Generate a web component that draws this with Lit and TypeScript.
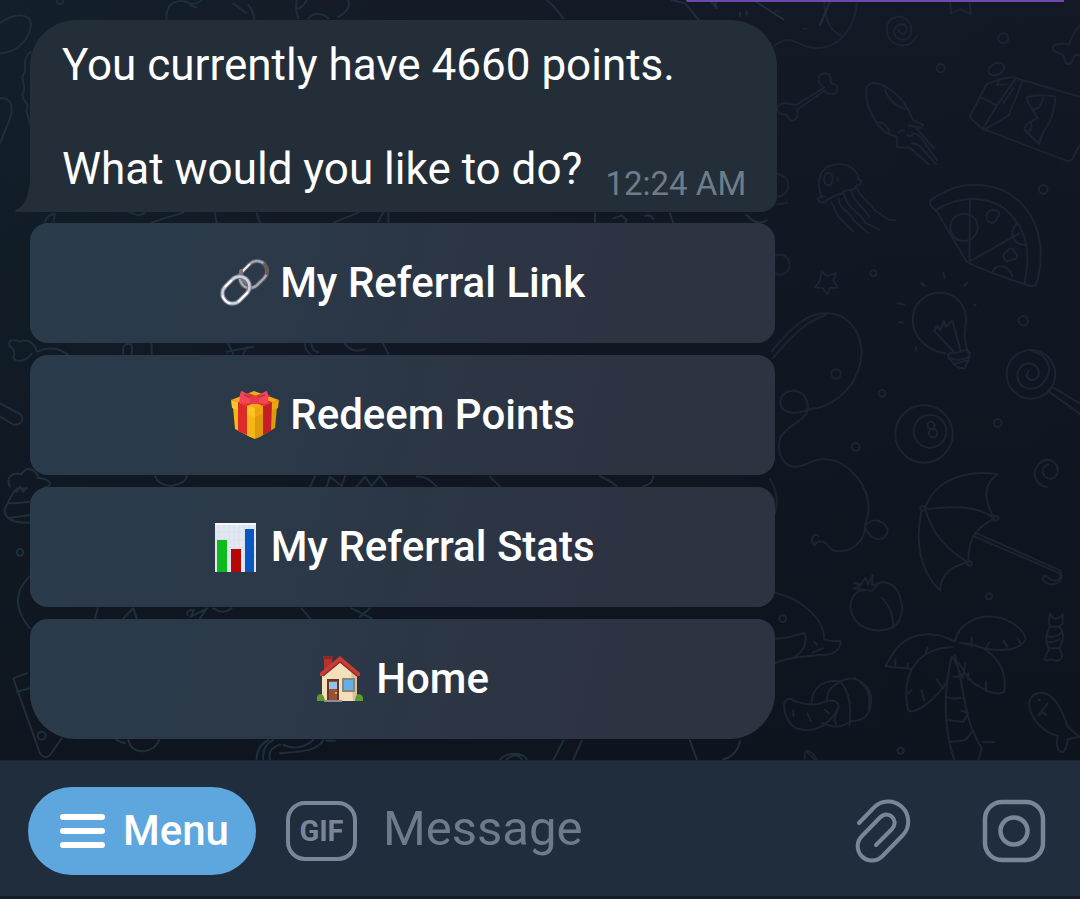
import { LitElement, html, css, svg } from "lit";
import { customElement } from "lit/decorators.js";

const linkIcon = svg`
  <g fill="none" stroke-linecap="round">
    <g transform="translate(33.500 16.500) rotate(-45)">
      <rect x="-15" y="-10" width="30" height="20" rx="10" stroke="#50515c" stroke-width="4.500"/>
      <rect x="-15" y="-10" width="30" height="20" rx="10" stroke="#a3a6b3" stroke-width="2.500"/>
      <path d="M-10-10h14" stroke="#eceef4" stroke-width="2"/>
      <path d="M10 8.500q5-3 5-8" stroke="#6f5754" stroke-width="3"/>
    </g>
    <path d="M21 13q-1 8 6 12" stroke="#7d767d" stroke-width="4"/>
    <g transform="translate(16 32) rotate(-45)">
      <rect x="-15" y="-10" width="30" height="20" rx="10" stroke="#777a8c" stroke-width="4.500"/>
      <rect x="-15" y="-10" width="30" height="20" rx="10" stroke="#cdd0de" stroke-width="2.500"/>
      <path d="M-14-5q-2 5 0 10M-6 10h12M-5-10h8" stroke="#fff" stroke-width="2"/>
    </g>
  </g>`;

const giftIcon = svg`
  <path d="M3 17 25 25v24L20 47 5 39z" fill="#f5b715"/>
  <path d="M47 17 25 25v24L30 47 45 38z" fill="#dd9a0c"/>
  <path d="M1 10 24 1 49 10 25 19z" fill="#f5a91c"/>
  <path d="M1 10 25 18v9L2 18z" fill="#ffc524"/>
  <path d="M49 10 25 18v9L48 18z" fill="#eda50f"/>
  <path d="M8 12l9 4v29L8 41z" fill="#e02a28"/>
  <path d="M42 12l-9 4v29l8-4z" fill="#c51f25"/>
  <path d="M8 12 33 3l8 3-24 10zM42 12 18 3l-7 4 22 9z" fill="#d93a24"/>
  <path d="M22 8Q14 1 11 1q-2 5-1 12 6 2 13-1zM27 8q7-7 10-7 2 5 1 12-6 2-12-1z" fill="#f4465a"/>
  <path d="M22 8l-8-3M27 8l8-3" stroke="#c92a3e" stroke-width="1.500"/>
  <rect x="20" y="6" width="9" height="8" rx="3" fill="#e5394d"/>`;

const chartIcon = svg`
  <rect x="4" y="1" width="41" height="49" fill="#e1e8f1"/>
  <path d="M4 2h41" stroke="#f6f9fc" stroke-width="2"/>
  <path d="M8 3v46M13 3v46M18 3v46M23 3v46M28 3v46M33 3v46M38 3v46M4 10h41M4 18h41M4 26h41M4 34h41" stroke="#d8e0ea" stroke-width="1"/>
  <rect x="6" y="18" width="10" height="32" fill="#0dbb1c"/>
  <rect x="20" y="27" width="10" height="23" fill="#b80508"/>
  <rect x="34" y="7" width="9" height="43" fill="#0b57c2"/>`;

const houseIcon = svg`
  <path d="M8 3h8v12H8z" fill="#b5312d"/><path d="M7 2h10v3H7z" fill="#8e2826"/>
  <path d="M6 18 24 5l17 14v28H6z" fill="#f4dfbb"/>
  <path d="M35 15l6 5v27h-4z" fill="#dcc096"/>
  <path d="M24 2 44 19v3h-3L24 8 7 22H4v-3z" fill="#c93c36"/>
  <path d="M24 8 7 22M24 8l17 14" stroke="#8c2a2a" stroke-width="1.500"/>
  <path d="M11 25h12v22H11z" fill="#6a3524"/><path d="M13 27h8v20h-8z" fill="#96513a"/>
  <path d="M13 28h8v7h-8z" fill="#8fc4ef"/><circle cx="20" cy="39" r="1" fill="#f4c95e"/>
  <path d="M26 24h13v14H26z" fill="#8b8478"/><path d="M28 26h9v10h-9z" fill="#66aee8"/>
  <path d="M8 46h18v2H8z" fill="#8b8f92"/>
  <path d="M1 46q-1-5 3-6 4 0 5 7H1zM39 47q0-6 4-7 5 1 4 7z" fill="#5d9a35"/>`;

const actions = [
  { label: "My Referral Link", icon: linkIcon },
  { label: "Redeem Points", icon: giftIcon },
  { label: "My Referral Stats", icon: chartIcon },
  { label: "Home", icon: houseIcon },
];

// Doodles are drawn on a grid three times finer than the wallpaper itself.
const doodlesTopRight = svg`
  <path d="M15 137q25-24 58-13c30 10 30 20 70 20 70 0 115-70 118-140M163 0c0 60 20 95 52 108"/>
  <path d="M385 90q8 15 18 10c12-8 8-26-6-27-20-1-31 20-21 34 12 18 40 17 47-7 7-30-18-53-43-50-30 5-38 40-22 65 20 28 65 32 83-8"/>
  <path d="M540 0l3 42 27-15 33 15-5-42M15 37q6-8 12-2M100 86h10"/>
  <circle cx="700" cy="115" r="15"/><circle cx="512" cy="205" r="12"/><circle cx="820" cy="568" r="13"/><circle cx="310" cy="820" r="9"/>
  <path d="M930 75q-25 30-32 58c-25-5-50 0-50 12 0 15 28 13 32 20 4 10 5 28 15 28 15 0 12-22 20-27h20"/>
  <path d="M78 315 163 262q-20-10-17-28c5-20 35-18 36 0-1 12 0 16 8 18 18 4 14 30-3 30-14 0-17-3-24-10L80 330c8 15 0 32-13 32-12 0-15-12-17-19-12 5-30-4-28-19q4-16 25-14 20 2 31 5z"/>
  <path d="M290 262c12-25 45-10 73 8 35 25 55 60 65 90l32 15-8 8-35-7M290 262c-10 50 30 120 60 137l30 12 2 30 38 3M345 268c10 30 30 50 60 58M328 367q28 5 30 35M415 378q24 0 34 18l42 48M430 400q20 5 30 22l40 58M425 430q20 0 35 20l37 42M418 442l60 52M386 398q6-10 16-6M412 405q8 6 16 0"/>
  <path d="M155 590c-25-65 10-100 55-98 35 2 55 28 57 47 14 0 5 20-7 17-5 15-23 15-25 15-10-2-15 5-20 10-10 0-20 5-25 8-7 5-13 10-20 9-2 10-23 15-25 0q2-10 20-8"/>
  <ellipse cx="175" cy="537" rx="13" ry="19"/>
  <path d="M203 533v10M185 608l20 43 45 44M205 595c5 40 35 35 45 65l45 40M222 582c10 50 50 50 62 85l45 22M243 572c10 35 30 40 55 78M258 560c20 45 40 40 55 70l45 30h18"/>
  <path d="M650 252 600 348l4 8 33 30 252 96q20 4 24-18l17-30M690 237l40-5 200 58M652 252l38-15-10 17 30-1M630 290l50 26M735 238l-52 75-43 70M758 242l-42 105-32 18-42 25M730 265l-30 45"/>
  <ellipse cx="679" cy="207" rx="25" ry="17" transform="rotate(-25 679 207)"/>
  <path d="M770 292q40-12 86-2c-5 90-40 90-48 142l-45-44q5-18 20-23l20-12-28-45zM790 330l20-10 10-28M770 400l15-15-2-20"/>
  <path d="M480 603c95-75 220-60 285 20 50 60 58 150 35 225-4 15-20 10-30 7-75-25-135-45-180-70l-92-155q-18-6-18-27z"/>
  <path d="M496 632c80-55 180-40 225 10 50 55 62 120 42 208M600 600l-2 185 150-85"/>
  <circle cx="582" cy="682" r="41"/><path d="M740 670c-25 30-12 63 25 65M668 815c10-23 45-25 60 15"/>
  <path d="M655 665c-12-15-5-35 15-35 20 2 22 14 12 22-2 12-15 22-27 13zM702 775c-5-15 4-20 12-22 0-12 20-8 20 3 15 15 5 25-5 20-5 8-20 12-27-1z"/>
  <path d="M22 522c45 5 45 65-2 68M22 612q20 0 30-5M18 767c30-10 45 15 40 35-5 20-25 25-40 20"/>
  <path d="M155 815l15 13 28-9-8 24 14 20-24 1-8 20-14-20-24-2 16-20zM452 850l10 9M520 818l5 14M582 858l9-7"/>`;

const doodlesMidRight = svg`
  <path d="M5 245c60-75 110-120 170-115M8 265c60-70 105-115 160-130M175 130c75 5 120 90 90 170-20 60-80 115-150 118-45 20-90 8-83-26 5-45 90-42 80 28-2 30-60 45-80 80-15 40 5 88 40 90 50 0 50-30 110-20 50 5 122 80 113 155-5 35-10 30-10 45 20-35 70-15 68 15-5 30-50 35-68-15 0 25-20 70-70 73-40 5-35-20-55-28-10 0-20-3-25 10-10 0-12-20-5-27q10-8 15 1"/>
  <circle cx="198" cy="312" r="14"/><circle cx="336" cy="370" r="10"/><circle cx="760" cy="152" r="14"/><circle cx="683" cy="459" r="12"/><circle cx="257" cy="531" r="12"/>
  <path d="M525 250c-60-10-97-55-97-100 0-50 40-82 80-82 55 0 85 45 80 90-2 25-10 40 6 90M540 265c-12-10-5-18 10-17 20 3 15-8 40-7 10 0 12 10 5 20-15 10-30 12-55 4zM537 265l20 22q10 8 27 8l15-35M550 282l40-10M492 182l60 64M492 182l10-15 8 15 12-29 5 18 20-20 26 95M383 100l20 4M387 157h10M438 230v10M612 105h5M455 38l10 10M520 10l4 14M583 45l10-7"/>
  <circle cx="783" cy="313" r="73"/>
  <path d="M785 243c50 10 65 55 40 88-20 35-65 30-78 5-15-32 8-58 35-55 25 3 35 38 10 48-20 5-28-15-15-28M845 350l85 50M833 362l97 70"/>
  <circle cx="462" cy="492" r="86"/><circle cx="480" cy="484" r="49"/><circle cx="483" cy="466" r="11"/><circle cx="489" cy="489" r="13"/>
  <path d="M835 583c-30 10-15 45 8 43 28-5 25-45 0-55-30-8-55 25-48 50 5 20 20 28 36 30"/>
  <path d="M465 715c25-75 110-120 217-102-45 35-40 75-10 132-55-42-130-35-207-28zM465 715c20 75 70 130 130 162 0-60 10-95 75-130M455 720c-20 90-8 180 55 242 2-40 20-70 85-85M615 800l250 108c15 15-5 35-30 15-10-12-20 0-15 8 20 25 70 10 50-30L620 790"/>
  <circle cx="458" cy="715" r="7"/><circle cx="678" cy="745" r="7"/><circle cx="598" cy="880" r="7"/>
  <path d="M0 628q30 45 15 100"/>`;

const doodlesBottomRight = svg`
  <path d="M15 158c75 15 150 80 147 140 20 8 35 5 50 5 0 25-20 45-65 42-30 5-80 0-132 24M15 295c30 5 60-12 90-15 8 35-10 60-35 72M132 305l10 10M128 337l30-12"/>
  <circle cx="38" cy="236" r="10"/><circle cx="657" cy="169" r="9"/><circle cx="392" cy="632" r="9"/>
  <path d="M280 150c-60 10-50 110 30 120 80 10 100-50 78-105-15-40-50-45-75-30M252 128l22 5 12-20 8 20 14-28-2 30 15 2-15 15-20-2-34-5 20-8zM335 172c25 25 35 60 35 88"/>
  <path d="M555 305c10-60 80-85 135-72 50 15 75 45 77 65-15 30-60 35-110 30-30-5-50-15-85-18M555 305c-70-40-150-25-185 35-12 15-15 25-24 38 20 5 50 5 75 8M550 322c-90 0-160 60-137 185 10 20 50-8 75-30 20-20 45-40 48-80M570 310c90 0 145 70 133 145-20 15-60-5-90-25-20-15-30-30-45-60M545 350c-20 80-30 200 8 310M555 345c30 100 20 180 80 280l-10 38M527 470q20 10 45 3M530 540l50 5 15-25-20-8M540 605c40 0 50-2 65-30M548 350l30 65 8-45M550 410h30M605 320v-28M648 325l10-18M712 320l-12-18M752 310l-10-15M376 378v-20M410 385l5-15M465 345l8-22M455 450l8 32M415 460l10-10M500 420l20 25M648 452v-28M595 420v-20M640 607h32"/>
  <path d="M43 490c5-15 20-18 28-8 40 15 70 15 95 3 30-12 50 10 35 25-30 55-80 70-120 55-25-8-42-50-38-75zM125 492c0-50 35-75 85-68 50-25 100 15 93 65-2 40-30 55-62 55-30 25-60 15-85 5M170 485c0-40 20-45 40-60 30 25 35 90 28 130M205 500l-12 40 5 12M255 415q55 30 40 95M70 510v18M112 520l10 22M165 510l12 10"/>
  <path d="M840 220l10 15q15 5 28-12v27l-10 10c15 20 15 35 0 65 5 10 20 35-10 38-15-12-30 5-34-5 5-20 8-20 12-30-10-25-8-50 4-70-8-15 0-25 0-38zM840 260h28M832 288q20 8 42-10M835 305q20 5 35-10M840 325h28"/>
  <path d="M778 485c10-35 55-35 80 0 15 20 30 60 35 75l35 30-35 8q-2 30-15 38c-22 0-18-35-15-48-40-10-90-55-85-103zM833 490l-28 36 12-10 12 10M805 480h5M105 655c-5-30 15-30 35 3M110 635l25 25"/>`;

const doodlesTopLeft = svg`
  <path d="M0 70c45-35 100-30 92 10-8 50-50 78-92 80M0 295c45-5 40 45 20 85L0 430M500 58c-5-55 40-65 75-45q25-5 30-13M570 15l20 8M700 10l40 30M745 15q15 20 18 43M890 0q-5 30 5 55M920 0q-10 20-25 25M925 55c15-20 45-15 60 0M1045 0q10 30-30 50M92 155c-30 25-10 50-20 65-15 15 10 35-3 60-10 20 25 30 10 50l10 40"/>
  <circle cx="180" cy="2" r="10"/><path d="M135 665q10-25 30-22l-5 22M385 635l30 12 20-8M455 668q30-12 95-30M645 640l5 28M770 640l10 28M1000 668l75-30M1135 665l15-28M1165 640v28"/>
  <path d="M1640 0q25 20 50 55M2015 0l40 10 40 48M2130 0l20 24-5-25M2260 0l90 58M2490 5l-30 70M2220 38v10M2240 35v10M1785 640v28M1840 655l25-8 15 12-5 10M1935 648q20-5 25 10M2010 640l10 30M2240 645q30 35 60 15"/>`;

const doodlesLeft = svg`
  <path d="M110 95c50-20 75-5 95 10M95 100c-10 20-40 30-55 15q8-30-10-35c-10-20 10-25 30-15 25-10 45 5 50 30M0 250l60 32c15 15 5 35-20 32L0 290M370 102q-5-30 15-30 15-5 10 30M455 72v30M680 95l80-15M685 72l15 30M740 82l-10 20M915 72q0 18 15 30M935 72q0 20 20 25M1035 72q25 30 60 15M1150 72l15 30"/>
  <path d="M30 500c-15-30 10-45 35-37 15-30 50-10 48 10 45 5 45 25 20 30M25 545c30-60 30-35 55-40M88 545q-30 5-65 5c-25 35 5 60 65 58M25 595l65-10M50 515l10-15 10 15 10-12"/>
  <circle cx="60" cy="697" r="10"/><path d="M88 770q-70 70 2 155M465 468q10 28 50 30 45-10 45-30M930 500l15-30M980 500l10-30 35 28 10-30M1070 500l25-30 20 28 25-30 20 28M285 895l8-30M370 895l30-30 10 30M562 885q-5-15 20-15l-10 20 40-20M600 895l20-30M640 865q30 20 55 0M905 865l25 30M1055 865l60 30M1110 865l-30 25"/>
  <path d="M80 1060l-40 15 80 225q15 20 30 5l35-50M50 1115l40-10"/><circle cx="125" cy="1247" r="12"/>
  <path d="M345 1255q10 10 30 15M385 1260c10 50 80 40 92 0M770 1318q0-40 35-58M790 1318q-5-40 30-58M810 1318q-10-30 30-45M840 1300c60-5 110-5 130-40M850 1275q50 20 90-15M980 1262h25M1500 1320c20-30 80-20 80 0M1520 1318q30-25 45 0M1660 1320l30-58M1720 1318l25-55M2070 1262l20 55M2170 1318q40-10 50-55M1250 470q30-5 60 30M1470 470l30 30M1800 468q40 20 50 30M1960 468q0 25-30 30"/>`;

@customElement("app-root")
export class AppRoot extends LitElement {
  static styles = css`
    :host {
      display: flex;
      flex-direction: column;
      min-height: 100vh;
      background: #10151f;
      font-family: Roboto, "Liberation Sans", sans-serif;
      color: #fff;
    }
    * { box-sizing: border-box; }
    button {
      font: inherit;
      color: inherit;
      background: none;
      border: 0;
      padding: 0;
      cursor: pointer;
    }
    svg { display: block; flex: none; }
    .chat {
      position: relative;
      isolation: isolate;
      flex: 1;
      display: flex;
      flex-direction: column;
      padding-bottom: 21px;
      background: linear-gradient(100deg, #12202b 0%, #141c28 22%, #131a26 50%, #121824 100%);
    }
    .wallpaper {
      position: absolute;
      inset: 0;
      width: 100%;
      height: 100%;
      z-index: -1;
      fill: none;
      stroke-width: 6;
      stroke-linecap: round;
      stroke-linejoin: round;
    }
    .shade { stroke: none; }
    .cool { stroke: #1e2e3b; }
    .dim { stroke: #1d2431; }
    .outgoing {
      align-self: flex-end;
      width: 35%;
      height: 2px;
      margin-right: 16px;
      background: #6f48ad;
      border-bottom-left-radius: 6px;
    }
    .incoming {
      width: 69%;
      margin: 18px 0 0 30px;
      display: flex;
      flex-direction: column;
      gap: 11px;
    }
    .bubble {
      position: relative;
      padding: 19px 31px 17px 32px;
      margin-right: -2px;
      background: #232e39;
      border-radius: 46px 46px 16px 0;
    }
    .tail {
      position: absolute;
      right: 100%;
      bottom: 0;
      fill: #232e39;
    }
    .message {
      margin: 0 0 52px;
      font-size: 44px;
      line-height: 52px;
    }
    .closing {
      display: flex;
      align-items: flex-end;
      justify-content: space-between;
    }
    .closing .message { margin: 0; }
    .time {
      flex: none;
      font-size: 33px;
      line-height: 22px;
      color: #6f7c8a;
    }
    .keyboard {
      display: flex;
      flex-direction: column;
      gap: 12px;
    }
    .action {
      display: flex;
      align-items: center;
      justify-content: center;
      gap: 10px;
      min-height: 120px;
      border-radius: 18px;
      background: linear-gradient(105deg, #2a3b4b 0%, #2b3847 40%, #2d3342 75%, #2d3340 100%);
      font-size: 42px;
      font-weight: 500;
      line-height: 52px;
    }
    .action:last-child { border-radius: 18px 18px 46px 46px; }
    .composer {
      display: flex;
      align-items: center;
      min-height: 139px;
      padding: 4px 34px 0 28px;
      background: #202d3c;
      border-top: 1px solid #1d2633;
      border-bottom: 3px solid #131d29;
    }
    .menu {
      display: flex;
      align-items: center;
      gap: 18px;
      height: 88px;
      padding: 0 27px 0 32px;
      border-radius: 44px;
      background: #5ea6de;
      font-size: 42px;
      font-weight: 500;
    }
    .gif {
      flex: none;
      width: 71px;
      height: 60px;
      margin-left: 30px;
      border: 4px solid #788797;
      border-radius: 19px;
      color: #788797;
      font-size: 29px;
      font-weight: 700;
      line-height: 52px;
    }
    .field {
      flex: 1;
      min-width: 0;
      height: 72px;
      margin: 0 24px 4px 26px;
      padding: 0;
      border: 0;
      outline: 0;
      background: none;
      color: #fff;
      font: 400 49px/72px Roboto, "Liberation Sans", sans-serif;
    }
    .field::placeholder { color: #6d7b8a; opacity: 1; }
    .tools {
      display: flex;
      align-items: center;
      gap: 70px;
      color: #788797;
    }
  `;

  render() {
    return html`
      <main class="chat">
        <svg class="wallpaper" viewBox="0 0 1080 760" preserveAspectRatio="xMaxYMax slice" aria-hidden="true">
          <defs>
            <linearGradient id="fade" x1="0" y1="0" x2="0" y2="1">
              <stop offset="0" stop-color="#0d131c" stop-opacity="0"/>
              <stop offset="1" stop-color="#0d131c" stop-opacity=".75"/>
            </linearGradient>
          </defs>
          <rect class="shade" width="1080" height="760" fill="url(#fade)"/>
          <g class="dim" transform="translate(770 0) scale(.33333)">${doodlesTopRight}</g>
          <g class="dim" transform="translate(770 270) scale(.33333)">${doodlesMidRight}</g>
          <g class="dim" transform="translate(770 540) scale(.33333)">${doodlesBottomRight}</g>
          <g class="cool" transform="scale(.33333)">${doodlesTopLeft}</g>
          <g class="cool" transform="translate(0 320) scale(.33333)">${doodlesLeft}</g>
        </svg>
        <div class="outgoing"></div>
        <section class="incoming">
          <div class="bubble">
            <svg class="tail" width="15" height="34" viewBox="0 0 15 34" aria-hidden="true">
              <path d="M15 0v34H1q-2-1 0-2Q14 26 15 0z"/>
            </svg>
            <p class="message">You currently have 4660 points.</p>
            <div class="closing">
              <p class="message">What would you like to do?</p>
              <time class="time">12:24 AM</time>
            </div>
          </div>
          <div class="keyboard">
            ${actions.map(
              (a) => html`<button class="action" type="button">
                <svg width="50" height="50" viewBox="0 0 50 50" aria-hidden="true">${a.icon}</svg>
                <span>${a.label}</span>
              </button>`
            )}
          </div>
        </section>
      </main>
      <footer class="composer">
        <button class="menu" type="button">
          <svg width="45" height="36" viewBox="0 0 45 36" aria-hidden="true">
            <path d="M3 4h39M3 18h39M3 32h39" stroke="#fff" stroke-width="6" stroke-linecap="round"/>
          </svg>
          <span>Menu</span>
        </button>
        <button class="gif" type="button">GIF</button>
        <input class="field" type="text" placeholder="Message" aria-label="Message" />
        <div class="tools">
          <button type="button" aria-label="Attach file">
            <svg width="58" height="64" viewBox="0 0 58 64" fill="none" stroke="currentColor" stroke-width="4" stroke-linecap="round" stroke-linejoin="round">
              <path d="M5 24 19.500 9A19.500 19.500 0 0 1 49 36L28 57.500A14.300 14.300 0 0 1 8 37L26 18.500C34 10 46 21 38 30L22 46"/>
            </svg>
          </button>
          <button type="button" aria-label="Open camera">
            <svg width="64" height="64" viewBox="0 0 64 64" fill="none" stroke="currentColor" stroke-width="4.500">
              <rect x="3" y="3" width="58" height="58" rx="17"/>
              <circle cx="32" cy="32" r="13.500"/>
            </svg>
          </button>
        </div>
      </footer>
    `;
  }
}
